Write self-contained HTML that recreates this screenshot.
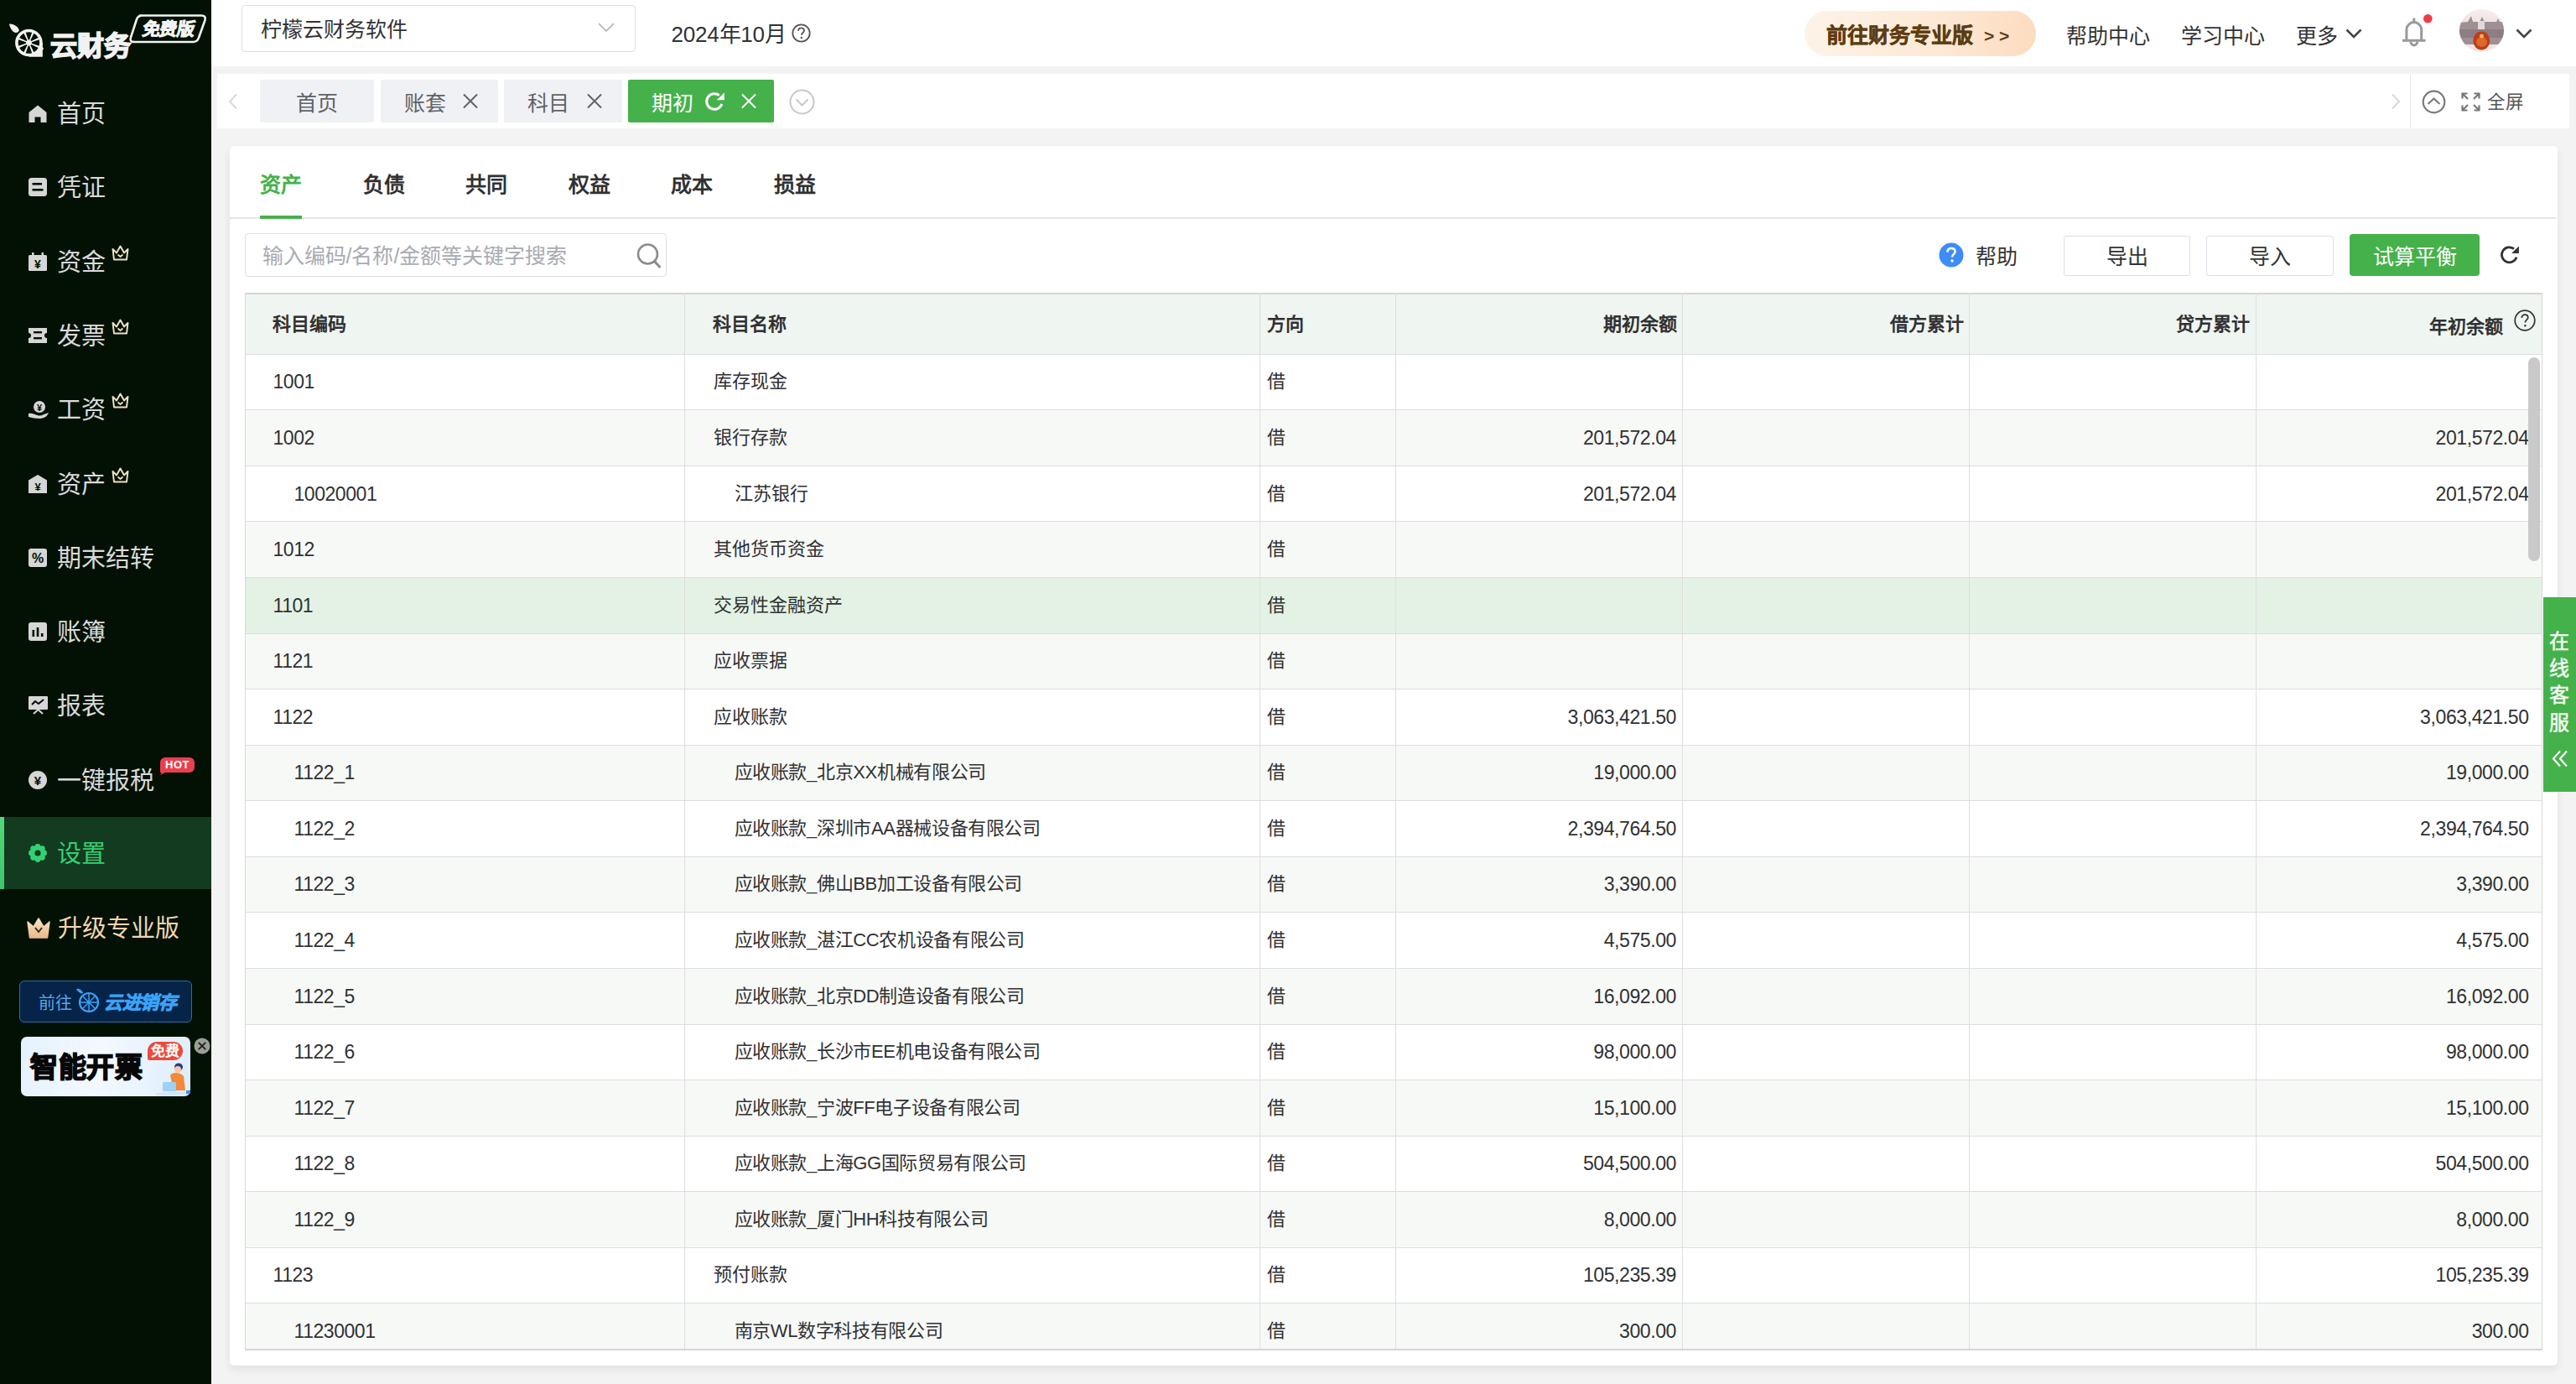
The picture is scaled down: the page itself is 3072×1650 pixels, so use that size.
<!DOCTYPE html>
<html lang="zh-CN">
<head>
<meta charset="utf-8">
<style>
*{box-sizing:border-box;margin:0;padding:0}
html,body{width:3072px;height:1650px;overflow:hidden}
body{position:relative;background:#f3f3f3;font-family:"Liberation Sans",sans-serif;color:#333}
.a{position:absolute;white-space:nowrap}
.bx{position:absolute}
svg{position:absolute;overflow:visible}
</style>
</head>
<body>
<div class="bx" style="left:0;top:0;width:252px;height:1650px;background:#021103"></div>
<svg style="left:0;top:0" width="252" height="80" viewBox="0 0 252 80">
<g fill="#f2f2f2">
<path d="M11 28.7 C15 28 21 31 22.9 36 C22 39.5 17 40 14.5 36.5 C12.5 33.5 11.5 31 11 28.7 Z"/>
<circle cx="34.4" cy="51" r="16.3"/>
<path d="M34.4 51 H50.8 V56 L52 58 L50.8 60 V67.7 H34.4 Z"/>
</g>
<path d="M33.73 47.56 L30.66 38.76 A12.8 12.8 0 0 1 38.14 38.76 L35.07 47.56 Z M36.36 48.10 L40.41 39.70 A12.8 12.8 0 0 1 45.70 44.99 L37.30 49.04 Z M37.84 50.33 L46.64 47.26 A12.8 12.8 0 0 1 46.64 54.74 L37.84 51.67 Z M37.30 52.96 L45.70 57.01 A12.8 12.8 0 0 1 40.41 62.30 L36.36 53.90 Z M35.07 54.44 L38.14 63.24 A12.8 12.8 0 0 1 30.66 63.24 L33.73 54.44 Z M32.44 53.90 L28.39 62.30 A12.8 12.8 0 0 1 23.10 57.01 L31.50 52.96 Z M30.96 51.67 L22.16 54.74 A12.8 12.8 0 0 1 22.16 47.26 L30.96 50.33 Z M31.50 49.04 L23.10 44.99 A12.8 12.8 0 0 1 28.39 39.70 L32.44 48.10 Z" fill="#021103"/>
<text x="60" y="66" font-size="32" font-weight="bold" fill="#f2f2f2" stroke="#f2f2f2" stroke-width="1.6" style="font-family:'Liberation Sans',sans-serif">云财务</text>
<path d="M166 18.5 H240 Q246 18.5 244.5 24 L237 45 Q235.5 50 230 50 H160 Q154 50 156 44.5 L163 23 Q164.5 18.5 170 18.5 Z" fill="none" stroke="#f2f2f2" stroke-width="2.6"/>
<text x="170" y="42.5" font-size="21" font-weight="bold" fill="#f2f2f2" stroke="#f2f2f2" stroke-width="0.9" style="font-family:'Liberation Sans',sans-serif" transform="translate(6 0) skewX(-10)">免费版</text>
</svg>
<svg style="left:34px;top:124.0px" width="22" height="22" viewBox="0 0 22 22"><path d="M11 1.5 L21.5 10 V22 H14.5 V15.5 H7.5 V22 H0.5 V10 Z" fill="#d6d6d6"/></svg>
<div class="a " style="top:116.00px;font-size:29px;line-height:40px;color:#dadada;left:68.00px;">首页</div>
<svg style="left:34px;top:212.3px" width="22" height="22" viewBox="0 0 22 22"><rect x="0" y="0" width="22" height="22" rx="3.5" fill="#d6d6d6"/><rect x="4.5" y="6" width="11.5" height="2.6" fill="#021103"/><rect x="4.5" y="13" width="13" height="2.6" fill="#021103"/></svg>
<div class="a " style="top:204.30px;font-size:29px;line-height:40px;color:#dadada;left:68.00px;">凭证</div>
<svg style="left:34px;top:300.6px" width="22" height="22" viewBox="0 0 22 22"><rect x="0" y="3" width="22" height="19" rx="1.5" fill="#d6d6d6"/><rect x="4" y="0" width="2.5" height="5" fill="#d6d6d6"/><rect x="15.5" y="0" width="2.5" height="5" fill="#d6d6d6"/><text x="11" y="19" font-size="14" font-weight="bold" text-anchor="middle" fill="#021103" style="font-family:'Liberation Sans'">¥</text></svg>
<div class="a " style="top:292.60px;font-size:29px;line-height:40px;color:#dadada;left:68.00px;">资金</div>
<svg style="left:133px;top:291.6px" width="21" height="19" viewBox="0 0 21 19"><path d="M1.5 5 L6 9.5 L10.5 1.5 L15 9.5 L19.5 5 L18 17.5 H3 Z" fill="none" stroke="#ede0c4" stroke-width="2" stroke-linejoin="round"/><path d="M7.5 11.5 L10.5 14 L13.5 11.5" fill="none" stroke="#ede0c4" stroke-width="1.8"/></svg>
<svg style="left:34px;top:388.9px" width="22" height="22" viewBox="0 0 22 22"><path d="M0 2 H22 V8 A3 3 0 0 0 22 14 V20 H0 V14 A3 3 0 0 0 0 8 Z" fill="#d6d6d6"/><rect x="6" y="6" width="10" height="2.4" fill="#021103"/><rect x="6" y="13" width="10" height="2.4" fill="#021103"/></svg>
<div class="a " style="top:380.90px;font-size:29px;line-height:40px;color:#dadada;left:68.00px;">发票</div>
<svg style="left:133px;top:379.9px" width="21" height="19" viewBox="0 0 21 19"><path d="M1.5 5 L6 9.5 L10.5 1.5 L15 9.5 L19.5 5 L18 17.5 H3 Z" fill="none" stroke="#ede0c4" stroke-width="2" stroke-linejoin="round"/><path d="M7.5 11.5 L10.5 14 L13.5 11.5" fill="none" stroke="#ede0c4" stroke-width="1.8"/></svg>
<svg style="left:34px;top:477.2px" width="22" height="22" viewBox="0 0 22 22"><circle cx="13" cy="8" r="7" fill="#d6d6d6"/><text x="13" y="13" font-size="11" font-weight="bold" text-anchor="middle" fill="#021103" style="font-family:'Liberation Sans'">¥</text><path d="M0 16 C4 15 8 17.5 12 18.5 C16 19 20 16 24 15 C22 20 18 22 13 22 C8 22 4 21 0 20 Z" fill="#d6d6d6"/></svg>
<div class="a " style="top:469.20px;font-size:29px;line-height:40px;color:#dadada;left:68.00px;">工资</div>
<svg style="left:133px;top:468.2px" width="21" height="19" viewBox="0 0 21 19"><path d="M1.5 5 L6 9.5 L10.5 1.5 L15 9.5 L19.5 5 L18 17.5 H3 Z" fill="none" stroke="#ede0c4" stroke-width="2" stroke-linejoin="round"/><path d="M7.5 11.5 L10.5 14 L13.5 11.5" fill="none" stroke="#ede0c4" stroke-width="1.8"/></svg>
<svg style="left:34px;top:565.5px" width="22" height="22" viewBox="0 0 22 22"><path d="M11 0 L22 6.5 V22 H0 V6.5 Z" fill="#d6d6d6"/><text x="11" y="18.5" font-size="13" font-weight="bold" text-anchor="middle" fill="#021103" style="font-family:'Liberation Sans'">¥</text></svg>
<div class="a " style="top:557.50px;font-size:29px;line-height:40px;color:#dadada;left:68.00px;">资产</div>
<svg style="left:133px;top:556.5px" width="21" height="19" viewBox="0 0 21 19"><path d="M1.5 5 L6 9.5 L10.5 1.5 L15 9.5 L19.5 5 L18 17.5 H3 Z" fill="none" stroke="#ede0c4" stroke-width="2" stroke-linejoin="round"/><path d="M7.5 11.5 L10.5 14 L13.5 11.5" fill="none" stroke="#ede0c4" stroke-width="1.8"/></svg>
<svg style="left:34px;top:653.8px" width="22" height="22" viewBox="0 0 22 22"><rect x="0" y="0" width="22" height="22" rx="3" fill="#d6d6d6"/><text x="11" y="17" font-size="16" font-weight="bold" text-anchor="middle" fill="#021103" style="font-family:'Liberation Sans'">%</text></svg>
<div class="a " style="top:645.80px;font-size:29px;line-height:40px;color:#dadada;left:68.00px;">期末结转</div>
<svg style="left:34px;top:742.1px" width="22" height="22" viewBox="0 0 22 22"><rect x="0" y="0" width="22" height="22" rx="3" fill="#d6d6d6"/><rect x="4.5" y="9" width="2.6" height="8" fill="#021103"/><rect x="9.7" y="6" width="2.6" height="11" fill="#021103"/><rect x="14.9" y="13" width="2.6" height="4" fill="#021103"/></svg>
<div class="a " style="top:734.10px;font-size:29px;line-height:40px;color:#dadada;left:68.00px;">账簿</div>
<svg style="left:34px;top:830.4px" width="22" height="22" viewBox="0 0 22 22"><rect x="0" y="0" width="23" height="16" rx="1" fill="#d6d6d6"/><path d="M4 10 L8 6 L12 9 L18 4" stroke="#020d04" stroke-width="2" fill="none"/><path d="M11.5 16 L6 21 M11.5 16 L17 21" stroke="#d6d6d6" stroke-width="2"/></svg>
<div class="a " style="top:822.40px;font-size:29px;line-height:40px;color:#dadada;left:68.00px;">报表</div>
<svg style="left:34px;top:918.7px" width="22" height="22" viewBox="0 0 22 22"><circle cx="11" cy="11" r="11" fill="#d6d6d6"/><text x="11" y="17" font-size="15" font-weight="bold" text-anchor="middle" fill="#021103" style="font-family:'Liberation Sans'">¥</text></svg>
<div class="a " style="top:910.70px;font-size:29px;line-height:40px;color:#dadada;left:68.00px;">一键报税</div>
<div class="bx" style="left:191px;top:903px;width:41px;height:18px;background:#e9404f;border-radius:6px 6px 6px 0"></div>
<svg style="left:185px;top:914px" width="12" height="12" viewBox="0 0 12 12"><path d="M12 0 L6 10 L12 7 Z" fill="#e9404f"/></svg>
<div class="a" style="left:191px;top:903px;width:41px;text-align:center;font-size:13px;line-height:18px;font-weight:bold;color:#fff;letter-spacing:0.5px">HOT</div>
<div class="bx" style="left:0;top:974.0px;width:252px;height:86px;background:#133b20"></div>
<div class="bx" style="left:0;top:974.0px;width:5px;height:86px;background:linear-gradient(180deg,#55d77a,#3fc56c)"></div>
<svg style="left:34px;top:1006.0px" width="22" height="22" viewBox="0 0 22 22"><g fill="#33d074"><circle cx="11" cy="11" r="8"/><circle cx="18.60" cy="11.00" r="3.4"/><circle cx="16.37" cy="16.37" r="3.4"/><circle cx="11.00" cy="18.60" r="3.4"/><circle cx="5.63" cy="16.37" r="3.4"/><circle cx="3.40" cy="11.00" r="3.4"/><circle cx="5.63" cy="5.63" r="3.4"/><circle cx="11.00" cy="3.40" r="3.4"/><circle cx="16.37" cy="5.63" r="3.4"/></g><circle cx="11" cy="11" r="3.6" fill="#133b20"/></svg>
<div class="a " style="top:998.00px;font-size:29px;line-height:40px;color:#33d074;left:68.00px;">设置</div>
<svg style="left:32px;top:1093.3px" width="28" height="26" viewBox="0 0 28 26"><defs><linearGradient id="cg" x1="0" y1="0" x2="0" y2="1"><stop offset="0" stop-color="#fbe3c4"/><stop offset="1" stop-color="#e9b98a"/></linearGradient></defs>
<path d="M1 6 L8 12 L14 2 L20 12 L27 6 L24.5 25 H3.5 Z" fill="url(#cg)" stroke="url(#cg)" stroke-width="1.5" stroke-linejoin="round"/><path d="M10 13 L14 18 L18 13" fill="none" stroke="#3a2a10" stroke-width="2"/></svg>
<div class="a " style="top:1087.30px;font-size:29px;line-height:40px;color:#f3d5b0;left:69.00px;">升级专业版</div>
<div class="bx" style="left:23px;top:1169px;width:206px;height:50px;background:#062447;border:1.5px solid #2a6bb0;border-radius:6px"></div>
<div class="a " style="top:1182.00px;font-size:20px;line-height:28px;color:#5aa5ea;left:46.00px;">前往</div>
<svg style="left:90px;top:1178px" width="32" height="30" viewBox="0 0 32 30"><path d="M1 1 C4 0 8 2 9 6 C6 7 3 5 1 1 Z" fill="#3ba2f7"/>
<circle cx="16" cy="17" r="11" fill="none" stroke="#3ba2f7" stroke-width="2.2"/>
<g stroke="#3ba2f7" stroke-width="1.5"><line x1="16" y1="7" x2="16" y2="27"/><line x1="6" y1="17" x2="26" y2="17"/><line x1="9" y1="10" x2="23" y2="24"/><line x1="23" y1="10" x2="9" y2="24"/></g></svg>
<div class="a " style="top:1181.00px;font-size:22px;line-height:30px;color:#3ba2f7;font-weight:bold;left:124.00px;font-style:italic;letter-spacing:-0.5px;-webkit-text-stroke:0.8px #3ba2f7">云进销存</div>
<div class="bx" style="left:25px;top:1236px;width:202px;height:71px;border-radius:7px;background:linear-gradient(100deg,#e4f1fd 0%,#f4f9ff 45%,#dceefc 100%)"></div>
<div class="a " style="top:1251.00px;font-size:33px;line-height:44px;color:#080808;font-weight:bold;left:36.00px;-webkit-text-stroke:1.6px #080808;letter-spacing:0.5px">智能开票</div>
<div class="bx" style="left:176px;top:1242px;width:42px;height:22px;background:#ec4a3c;border-radius:11px 11px 11px 2px"></div>
<div class="a " style="top:1243.00px;font-size:17px;line-height:22px;color:#fff;font-weight:bold;left:177.00px;width:40px;text-align:center">免费</div>
<svg style="left:165px;top:1266px" width="62" height="42" viewBox="0 0 62 42">
<ellipse cx="48" cy="6" rx="5" ry="4.5" fill="#2b3a8c"/>
<circle cx="47" cy="9" r="4" fill="#f6c9a8"/>
<path d="M38 16 C40 12 50 12 54 17 L56 34 L42 34 Z" fill="#f28a3a"/>
<rect x="29" y="24" width="16" height="11" rx="1.5" fill="#9fd0f6"/>
<path d="M20 37 L60 35 L58 39 L22 40 Z" fill="#cfe6fb"/>
<rect x="57" y="34" width="5" height="4" fill="#3f8ee8"/>
</svg>
<svg style="left:231px;top:1237px" width="20" height="20" viewBox="0 0 20 20"><circle cx="10" cy="10" r="9.5" fill="#9a9d98"/><path d="M5.8 5.8 L14.2 14.2 M14.2 5.8 L5.8 14.2" stroke="#1b1f1b" stroke-width="1.8"/></svg>
<div class="bx" style="left:252px;top:0;width:2820px;height:79px;background:#fff"></div>
<div class="bx" style="left:288px;top:6px;width:470px;height:56px;border:1px solid #dcdfe6;border-radius:4px;background:#fff"></div>
<div class="a " style="top:17.00px;font-size:25px;line-height:36px;color:#333;left:311.00px;">柠檬云财务软件</div>
<svg style="left:713px;top:27px" width="20" height="12" viewBox="0 0 20 12"><path d="M1 1 L10 10 L19 1" fill="none" stroke="#b9bcc2" stroke-width="1.8"/></svg>
<div class="a " style="top:22.50px;font-size:26px;line-height:36px;color:#303133;left:800.50px;letter-spacing:-0.2px">2024年10月</div>
<svg style="left:944px;top:28px" width="23" height="23" viewBox="0 0 23 23"><circle cx="11.5" cy="11.5" r="10.2" fill="none" stroke="#555" stroke-width="1.8"/><path d="M8 8.8 C8 6.5 9.7 5.4 11.5 5.4 C13.5 5.4 15 6.6 15 8.5 C15 10.8 11.8 11.2 11.8 13.8" fill="none" stroke="#555" stroke-width="1.8"/><circle cx="11.8" cy="17" r="1.2" fill="#555"/></svg>
<div class="bx" style="left:2152px;top:13px;width:276px;height:54px;border-radius:27px;background:linear-gradient(90deg,#fdf3e8 0%,#fde8d4 60%,#fcdcc0 100%)"></div>
<div class="a " style="top:24.00px;font-size:25px;line-height:36px;color:#5c3d12;font-weight:bold;left:2178.00px;-webkit-text-stroke:0.5px #5c3d12">前往财务专业版</div>
<div class="a " style="top:28.00px;font-size:21px;line-height:30px;color:#5c3d12;font-weight:bold;left:2366.00px;">&gt; &gt;</div>
<div class="a " style="top:24.50px;font-size:25px;line-height:36px;color:#333;left:2464.00px;">帮助中心</div>
<div class="a " style="top:24.50px;font-size:25px;line-height:36px;color:#333;left:2601.00px;">学习中心</div>
<div class="a " style="top:24.50px;font-size:25px;line-height:36px;color:#333;left:2738.00px;">更多</div>
<svg style="left:2797px;top:34px" width="20" height="13" viewBox="0 0 20 13"><path d="M1.5 1.5 L10 10 L18.5 1.5" fill="none" stroke="#444" stroke-width="2.6"/></svg>
<svg style="left:2860px;top:18px" width="42" height="40" viewBox="0 0 42 40"><g fill="none" stroke="#999" stroke-width="3">
<path d="M18.8 3.5 V8"/><path d="M9.9 29.5 V17.5 A8.9 8.9 0 0 1 27.7 17.5 V29.5"/><path d="M5 30.3 H32.5"/><path d="M14.9 32 A3.9 3.9 0 0 0 22.7 32"/></g>
<circle cx="35.3" cy="4.3" r="5.3" fill="#f03a45"/></svg>
<svg style="left:2933px;top:11px" width="53" height="51" viewBox="0 0 53 51"><defs><clipPath id="av"><ellipse cx="26.5" cy="25.2" rx="26.5" ry="25.2"/></clipPath>
<linearGradient id="avs" x1="0" y1="0" x2="0" y2="1"><stop offset="0" stop-color="#f6eeea"/><stop offset="1" stop-color="#ddd0d0"/></linearGradient></defs>
<g clip-path="url(#av)"><rect width="53" height="51" fill="url(#avs)"/>
<path d="M0 16 L10 15 L14 8 L16 15 L24 15 L27 9 L30 15 L44 15 L46 11 L48 15 L53 15 V42 H0 Z" fill="#a09096"/>
<rect x="0" y="24" width="53" height="10" fill="#7e6e76" opacity="0.55"/>
<rect x="22" y="14" width="8" height="10" fill="#ece6e6" opacity="0.85"/>
<rect x="0" y="42" width="53" height="9" fill="#f2e6e2"/>
<ellipse cx="26.3" cy="37.5" rx="10" ry="11" fill="#b8401a"/><ellipse cx="26.5" cy="39" rx="6.5" ry="6" fill="#e0672a"/><circle cx="26.5" cy="32" r="2.5" fill="#f4b060"/></g></svg>
<svg style="left:3000px;top:34px" width="20" height="13" viewBox="0 0 20 13"><path d="M1.5 1.5 L10 10 L18.5 1.5" fill="none" stroke="#444" stroke-width="2.6"/></svg>
<div class="bx" style="left:259px;top:88px;width:2805px;height:65px;background:#fff"></div>
<svg style="left:271px;top:111px" width="14" height="20" viewBox="0 0 14 20"><path d="M11 1.5 L3 10 L11 18.5" fill="none" stroke="#d8d8d8" stroke-width="2"/></svg>
<div class="bx" style="left:310px;top:95px;width:136px;height:51px;background:#eff1f5;border-radius:2px"></div>
<div class="a " style="top:105.00px;font-size:25px;line-height:36px;color:#606266;left:353.00px;">首页</div>
<div class="bx" style="left:454px;top:95px;width:140px;height:51px;background:#eff1f5;border-radius:2px"></div>
<div class="a " style="top:105.00px;font-size:25px;line-height:36px;color:#606266;left:482.00px;">账套</div>
<svg style="left:552px;top:112px" width="18" height="17" viewBox="0 0 18 17"><path d="M1 0.5 L17 16.5 M17 0.5 L1 16.5" stroke="#606266" stroke-width="2"/></svg>
<div class="bx" style="left:601px;top:95px;width:141px;height:51px;background:#eff1f5;border-radius:2px"></div>
<div class="a " style="top:105.00px;font-size:25px;line-height:36px;color:#606266;left:629.00px;">科目</div>
<svg style="left:699.5px;top:112px" width="18" height="17" viewBox="0 0 18 17"><path d="M1 0.5 L17 16.5 M17 0.5 L1 16.5" stroke="#606266" stroke-width="2"/></svg>
<div class="bx" style="left:749px;top:95px;width:174px;height:51px;background:#45b14a;border-radius:2px"></div>
<div class="a " style="top:105.00px;font-size:25px;line-height:36px;color:#fff;left:777.00px;">期初</div>
<svg style="left:884px;top:112px" width="18" height="17" viewBox="0 0 18 17"><path d="M1 0.5 L17 16.5 M17 0.5 L1 16.5" stroke="#fff" stroke-width="2"/></svg>
<svg style="left:0;top:0" width="1" height="1"><path d="M860.84 123.87 A9.30 9.30 0 1 1 857.73 113.67" fill="none" stroke="#fff" stroke-width="3"/><polygon points="863.80,110.40 854.70,119.20 863.80,119.20" fill="#fff"/></svg>
<svg style="left:941px;top:106px" width="31" height="31" viewBox="0 0 31 31"><circle cx="15.5" cy="15.5" r="14" fill="none" stroke="#c8c8c8" stroke-width="2"/><path d="M8.5 12.5 L15.5 19.5 L22.5 12.5" fill="none" stroke="#c8c8c8" stroke-width="2"/></svg>
<svg style="left:2850px;top:111px" width="14" height="20" viewBox="0 0 14 20"><path d="M3 1.5 L11 10 L3 18.5" fill="none" stroke="#d8d8d8" stroke-width="2"/></svg>
<div class="bx" style="left:2874px;top:88px;width:1px;height:65px;background:#e8e8e8"></div>
<svg style="left:2888px;top:107px" width="29" height="29" viewBox="0 0 29 29"><circle cx="14.5" cy="14.5" r="12.8" fill="none" stroke="#7a7a7a" stroke-width="2.2"/><path d="M7.5 17 L14.5 10.5 L21.5 17" fill="none" stroke="#7a7a7a" stroke-width="2.2"/></svg>
<svg style="left:2935px;top:110px" width="23" height="23" viewBox="0 0 23 23"><g fill="none" stroke="#777" stroke-width="2.2">
<path d="M1.5 7.5 V1.5 H7.5 M1.5 1.5 L8 8"/><path d="M15.5 1.5 H21.5 V7.5 M21.5 1.5 L15 8"/><path d="M1.5 15.5 V21.5 H7.5 M1.5 21.5 L8 15"/><path d="M21.5 15.5 V21.5 H15.5 M21.5 21.5 L15 15"/></g></svg>
<div class="a " style="top:105.50px;font-size:21.5px;line-height:32px;color:#555;left:2965.50px;">全屏</div>
<div class="bx" style="left:274px;top:174px;width:2776px;height:1454px;background:#fff;border-radius:5px;box-shadow:0 5px 10px rgba(20,20,40,0.08)"></div>
<div class="a " style="top:201.50px;font-size:25px;line-height:36px;color:#44b24a;font-weight:bold;left:310.00px;">资产</div>
<div class="a " style="top:201.50px;font-size:25px;line-height:36px;color:#303133;font-weight:bold;left:432.60px;">负债</div>
<div class="a " style="top:201.50px;font-size:25px;line-height:36px;color:#303133;font-weight:bold;left:555.20px;">共同</div>
<div class="a " style="top:201.50px;font-size:25px;line-height:36px;color:#303133;font-weight:bold;left:677.80px;">权益</div>
<div class="a " style="top:201.50px;font-size:25px;line-height:36px;color:#303133;font-weight:bold;left:800.40px;">成本</div>
<div class="a " style="top:201.50px;font-size:25px;line-height:36px;color:#303133;font-weight:bold;left:923.00px;">损益</div>
<div class="bx" style="left:274px;top:259px;width:2775px;height:2px;background:#e6e6e6"></div>
<div class="bx" style="left:310px;top:257px;width:50px;height:4px;background:#45b14a"></div>
<div class="bx" style="left:292px;top:278px;width:503px;height:52px;border:1.5px solid #dcdfe6;border-radius:4px;background:#fff"></div>
<div class="a " style="top:287.50px;font-size:25px;line-height:34px;color:#a8abb2;left:312.50px;">输入编码/名称/金额等关键字搜索</div>
<svg style="left:759px;top:289px" width="30" height="32" viewBox="0 0 30 32"><circle cx="13.5" cy="14" r="11.5" fill="none" stroke="#8c8c8c" stroke-width="2.6"/><path d="M21.5 22.5 L27.5 29" stroke="#8c8c8c" stroke-width="3.2" stroke-linecap="round"/></svg>
<svg style="left:2312px;top:289px" width="30" height="30" viewBox="0 0 30 30"><circle cx="15" cy="15" r="14.5" fill="#3e8cf5"/><path d="M10.5 11.5 C10.5 8.5 12.5 7 15 7 C17.7 7 19.5 8.6 19.5 11 C19.5 14 16 14.3 16 17.5" fill="none" stroke="#fff" stroke-width="2.6"/><circle cx="16" cy="22" r="1.7" fill="#fff"/></svg>
<div class="a " style="top:288.00px;font-size:25px;line-height:36px;color:#333;left:2356.00px;">帮助</div>
<div class="bx" style="left:2461px;top:280.5px;width:151px;height:48px;border:1px solid #dcdfe6;border-radius:3px;background:#fff"></div>
<div class="a " style="top:288.00px;font-size:25px;line-height:36px;color:#333;left:2461.00px;width:151px;text-align:center;">导出</div>
<div class="bx" style="left:2631px;top:280.5px;width:152px;height:48px;border:1px solid #dcdfe6;border-radius:3px;background:#fff"></div>
<div class="a " style="top:288.00px;font-size:25px;line-height:36px;color:#333;left:2631.00px;width:152px;text-align:center;">导入</div>
<div class="bx" style="left:2802px;top:279px;width:155px;height:49.5px;background:#45b14a;border-radius:4px"></div>
<div class="a " style="top:288.00px;font-size:25px;line-height:36px;color:#fff;left:2802.00px;width:155px;text-align:center;">试算平衡</div>
<svg style="left:0;top:0" width="1" height="1"><path d="M3001.06 306.58 A9.00 9.00 0 1 1 2998.04 296.71" fill="none" stroke="#333" stroke-width="2.8"/><polygon points="3003.86,293.59 2995.10,302.07 3003.86,302.07" fill="#333"/></svg>
<div class="bx" style="left:292px;top:349px;width:2740px;height:1261px;background:#fff;overflow:hidden">
<div class="bx" style="left:0;top:0;width:2740px;height:74px;background:#eff5f0"></div>
<div class="bx" style="left:0;top:0;width:2740px;height:2px;background:#d5d5d5"></div>
<div class="bx" style="left:0;top:73.30px;width:2740px;height:66.5625px;background:#ffffff"></div>
<div class="bx" style="left:0;top:72.80px;width:2740px;height:1px;background:#dcdfdd"></div>
<div class="bx" style="left:0;top:139.86px;width:2740px;height:66.5625px;background:#f7f9f7"></div>
<div class="bx" style="left:0;top:139.36px;width:2740px;height:1px;background:#dcdfdd"></div>
<div class="bx" style="left:0;top:206.42px;width:2740px;height:66.5625px;background:#ffffff"></div>
<div class="bx" style="left:0;top:205.92px;width:2740px;height:1px;background:#dcdfdd"></div>
<div class="bx" style="left:0;top:272.99px;width:2740px;height:66.5625px;background:#f7f9f7"></div>
<div class="bx" style="left:0;top:272.49px;width:2740px;height:1px;background:#dcdfdd"></div>
<div class="bx" style="left:0;top:339.55px;width:2740px;height:66.5625px;background:#e3f2e4"></div>
<div class="bx" style="left:0;top:339.05px;width:2740px;height:1px;background:#dcdfdd"></div>
<div class="bx" style="left:0;top:406.11px;width:2740px;height:66.5625px;background:#f7f9f7"></div>
<div class="bx" style="left:0;top:405.61px;width:2740px;height:1px;background:#dcdfdd"></div>
<div class="bx" style="left:0;top:472.67px;width:2740px;height:66.5625px;background:#ffffff"></div>
<div class="bx" style="left:0;top:472.17px;width:2740px;height:1px;background:#dcdfdd"></div>
<div class="bx" style="left:0;top:539.24px;width:2740px;height:66.5625px;background:#f7f9f7"></div>
<div class="bx" style="left:0;top:538.74px;width:2740px;height:1px;background:#dcdfdd"></div>
<div class="bx" style="left:0;top:605.80px;width:2740px;height:66.5625px;background:#ffffff"></div>
<div class="bx" style="left:0;top:605.30px;width:2740px;height:1px;background:#dcdfdd"></div>
<div class="bx" style="left:0;top:672.36px;width:2740px;height:66.5625px;background:#f7f9f7"></div>
<div class="bx" style="left:0;top:671.86px;width:2740px;height:1px;background:#dcdfdd"></div>
<div class="bx" style="left:0;top:738.92px;width:2740px;height:66.5625px;background:#ffffff"></div>
<div class="bx" style="left:0;top:738.42px;width:2740px;height:1px;background:#dcdfdd"></div>
<div class="bx" style="left:0;top:805.49px;width:2740px;height:66.5625px;background:#f7f9f7"></div>
<div class="bx" style="left:0;top:804.99px;width:2740px;height:1px;background:#dcdfdd"></div>
<div class="bx" style="left:0;top:872.05px;width:2740px;height:66.5625px;background:#ffffff"></div>
<div class="bx" style="left:0;top:871.55px;width:2740px;height:1px;background:#dcdfdd"></div>
<div class="bx" style="left:0;top:938.61px;width:2740px;height:66.5625px;background:#f7f9f7"></div>
<div class="bx" style="left:0;top:938.11px;width:2740px;height:1px;background:#dcdfdd"></div>
<div class="bx" style="left:0;top:1005.17px;width:2740px;height:66.5625px;background:#ffffff"></div>
<div class="bx" style="left:0;top:1004.67px;width:2740px;height:1px;background:#dcdfdd"></div>
<div class="bx" style="left:0;top:1071.74px;width:2740px;height:66.5625px;background:#f7f9f7"></div>
<div class="bx" style="left:0;top:1071.24px;width:2740px;height:1px;background:#dcdfdd"></div>
<div class="bx" style="left:0;top:1138.30px;width:2740px;height:66.5625px;background:#ffffff"></div>
<div class="bx" style="left:0;top:1137.80px;width:2740px;height:1px;background:#dcdfdd"></div>
<div class="bx" style="left:0;top:1204.86px;width:2740px;height:66.5625px;background:#f7f9f7"></div>
<div class="bx" style="left:0;top:1204.36px;width:2740px;height:1px;background:#dcdfdd"></div>
<div class="bx" style="left:523.90px;top:0;width:1px;height:1261px;background:#dedede"></div>
<div class="bx" style="left:1210.00px;top:0;width:1px;height:1261px;background:#dedede"></div>
<div class="bx" style="left:1371.90px;top:0;width:1px;height:1261px;background:#dedede"></div>
<div class="bx" style="left:1713.90px;top:0;width:1px;height:1261px;background:#dedede"></div>
<div class="bx" style="left:2056.10px;top:0;width:1px;height:1261px;background:#dedede"></div>
<div class="bx" style="left:2397.90px;top:0;width:1px;height:1261px;background:#dedede"></div>
</div>
<div class="bx" style="left:292px;top:349px;width:1px;height:1261px;background:#d8d8d8"></div>
<div class="bx" style="left:3031px;top:349px;width:1px;height:1261px;background:#d8d8d8"></div>
<div class="bx" style="left:292px;top:1608px;width:2740px;height:2px;background:#d5d5d5"></div>
<div class="a " style="top:370.50px;font-size:22px;line-height:32px;color:#303133;font-weight:bold;left:325.00px;">科目编码</div>
<div class="a " style="top:370.50px;font-size:22px;line-height:32px;color:#303133;font-weight:bold;left:850.00px;">科目名称</div>
<div class="a " style="top:370.50px;font-size:22px;line-height:32px;color:#303133;font-weight:bold;left:1511.00px;">方向</div>
<div class="a " style="top:370.50px;font-size:22px;line-height:32px;color:#303133;font-weight:bold;right:1072.50px;text-align:right;">期初余额</div>
<div class="a " style="top:370.50px;font-size:22px;line-height:32px;color:#303133;font-weight:bold;right:730.50px;text-align:right;">借方累计</div>
<div class="a " style="top:370.50px;font-size:22px;line-height:32px;color:#303133;font-weight:bold;right:389.00px;text-align:right;">贷方累计</div>
<div class="a " style="top:373.50px;font-size:22px;line-height:32px;color:#303133;font-weight:bold;right:87.50px;text-align:right;">年初余额</div>
<svg style="left:2998px;top:369px" width="26" height="26" viewBox="0 0 26 26"><circle cx="13" cy="13" r="11.8" fill="none" stroke="#333" stroke-width="1.7"/><path d="M9.3 10 C9.3 7.4 11 6.2 13 6.2 C15.2 6.2 16.8 7.5 16.8 9.6 C16.8 12.3 13.3 12.7 13.3 15.6" fill="none" stroke="#333" stroke-width="1.7"/><circle cx="13.3" cy="19.2" r="1.2" fill="#333"/></svg>
<div class="a " style="top:439.38px;font-size:23px;line-height:32px;color:#303133;left:325.50px;letter-spacing:-0.45px">1001</div>
<div class="a " style="top:439.38px;font-size:22px;line-height:32px;color:#303133;left:851.00px;">库存现金</div>
<div class="a " style="top:439.38px;font-size:22px;line-height:32px;color:#303133;left:1510.50px;">借</div>
<div class="a " style="top:505.94px;font-size:23px;line-height:32px;color:#303133;left:325.50px;letter-spacing:-0.45px">1002</div>
<div class="a " style="top:505.94px;font-size:22px;line-height:32px;color:#303133;left:851.00px;">银行存款</div>
<div class="a " style="top:505.94px;font-size:22px;line-height:32px;color:#303133;left:1510.50px;">借</div>
<div class="a " style="top:505.94px;font-size:23px;line-height:32px;color:#303133;right:1073.00px;text-align:right;letter-spacing:-0.4px">201,572.04</div>
<div class="a " style="top:505.94px;font-size:23px;line-height:32px;color:#303133;right:56.40px;text-align:right;letter-spacing:-0.4px">201,572.04</div>
<div class="a " style="top:572.51px;font-size:23px;line-height:32px;color:#303133;left:350.50px;letter-spacing:-0.45px">10020001</div>
<div class="a " style="top:572.51px;font-size:22px;line-height:32px;color:#303133;left:875.50px;">江苏银行</div>
<div class="a " style="top:572.51px;font-size:22px;line-height:32px;color:#303133;left:1510.50px;">借</div>
<div class="a " style="top:572.51px;font-size:23px;line-height:32px;color:#303133;right:1073.00px;text-align:right;letter-spacing:-0.4px">201,572.04</div>
<div class="a " style="top:572.51px;font-size:23px;line-height:32px;color:#303133;right:56.40px;text-align:right;letter-spacing:-0.4px">201,572.04</div>
<div class="a " style="top:639.07px;font-size:23px;line-height:32px;color:#303133;left:325.50px;letter-spacing:-0.45px">1012</div>
<div class="a " style="top:639.07px;font-size:22px;line-height:32px;color:#303133;left:851.00px;">其他货币资金</div>
<div class="a " style="top:639.07px;font-size:22px;line-height:32px;color:#303133;left:1510.50px;">借</div>
<div class="a " style="top:705.63px;font-size:23px;line-height:32px;color:#303133;left:325.50px;letter-spacing:-0.45px">1101</div>
<div class="a " style="top:705.63px;font-size:22px;line-height:32px;color:#303133;left:851.00px;">交易性金融资产</div>
<div class="a " style="top:705.63px;font-size:22px;line-height:32px;color:#303133;left:1510.50px;">借</div>
<div class="a " style="top:772.19px;font-size:23px;line-height:32px;color:#303133;left:325.50px;letter-spacing:-0.45px">1121</div>
<div class="a " style="top:772.19px;font-size:22px;line-height:32px;color:#303133;left:851.00px;">应收票据</div>
<div class="a " style="top:772.19px;font-size:22px;line-height:32px;color:#303133;left:1510.50px;">借</div>
<div class="a " style="top:838.76px;font-size:23px;line-height:32px;color:#303133;left:325.50px;letter-spacing:-0.45px">1122</div>
<div class="a " style="top:838.76px;font-size:22px;line-height:32px;color:#303133;left:851.00px;">应收账款</div>
<div class="a " style="top:838.76px;font-size:22px;line-height:32px;color:#303133;left:1510.50px;">借</div>
<div class="a " style="top:838.76px;font-size:23px;line-height:32px;color:#303133;right:1073.00px;text-align:right;letter-spacing:-0.4px">3,063,421.50</div>
<div class="a " style="top:838.76px;font-size:23px;line-height:32px;color:#303133;right:56.40px;text-align:right;letter-spacing:-0.4px">3,063,421.50</div>
<div class="a " style="top:905.32px;font-size:23px;line-height:32px;color:#303133;left:350.50px;letter-spacing:-0.45px">1122_1</div>
<div class="a " style="top:905.32px;font-size:22px;line-height:32px;color:#303133;left:875.50px;letter-spacing:-0.35px">应收账款_北京XX机械有限公司</div>
<div class="a " style="top:905.32px;font-size:22px;line-height:32px;color:#303133;left:1510.50px;">借</div>
<div class="a " style="top:905.32px;font-size:23px;line-height:32px;color:#303133;right:1073.00px;text-align:right;letter-spacing:-0.4px">19,000.00</div>
<div class="a " style="top:905.32px;font-size:23px;line-height:32px;color:#303133;right:56.40px;text-align:right;letter-spacing:-0.4px">19,000.00</div>
<div class="a " style="top:971.88px;font-size:23px;line-height:32px;color:#303133;left:350.50px;letter-spacing:-0.45px">1122_2</div>
<div class="a " style="top:971.88px;font-size:22px;line-height:32px;color:#303133;left:875.50px;letter-spacing:-0.35px">应收账款_深圳市AA器械设备有限公司</div>
<div class="a " style="top:971.88px;font-size:22px;line-height:32px;color:#303133;left:1510.50px;">借</div>
<div class="a " style="top:971.88px;font-size:23px;line-height:32px;color:#303133;right:1073.00px;text-align:right;letter-spacing:-0.4px">2,394,764.50</div>
<div class="a " style="top:971.88px;font-size:23px;line-height:32px;color:#303133;right:56.40px;text-align:right;letter-spacing:-0.4px">2,394,764.50</div>
<div class="a " style="top:1038.44px;font-size:23px;line-height:32px;color:#303133;left:350.50px;letter-spacing:-0.45px">1122_3</div>
<div class="a " style="top:1038.44px;font-size:22px;line-height:32px;color:#303133;left:875.50px;letter-spacing:-0.35px">应收账款_佛山BB加工设备有限公司</div>
<div class="a " style="top:1038.44px;font-size:22px;line-height:32px;color:#303133;left:1510.50px;">借</div>
<div class="a " style="top:1038.44px;font-size:23px;line-height:32px;color:#303133;right:1073.00px;text-align:right;letter-spacing:-0.4px">3,390.00</div>
<div class="a " style="top:1038.44px;font-size:23px;line-height:32px;color:#303133;right:56.40px;text-align:right;letter-spacing:-0.4px">3,390.00</div>
<div class="a " style="top:1105.01px;font-size:23px;line-height:32px;color:#303133;left:350.50px;letter-spacing:-0.45px">1122_4</div>
<div class="a " style="top:1105.01px;font-size:22px;line-height:32px;color:#303133;left:875.50px;letter-spacing:-0.35px">应收账款_湛江CC农机设备有限公司</div>
<div class="a " style="top:1105.01px;font-size:22px;line-height:32px;color:#303133;left:1510.50px;">借</div>
<div class="a " style="top:1105.01px;font-size:23px;line-height:32px;color:#303133;right:1073.00px;text-align:right;letter-spacing:-0.4px">4,575.00</div>
<div class="a " style="top:1105.01px;font-size:23px;line-height:32px;color:#303133;right:56.40px;text-align:right;letter-spacing:-0.4px">4,575.00</div>
<div class="a " style="top:1171.57px;font-size:23px;line-height:32px;color:#303133;left:350.50px;letter-spacing:-0.45px">1122_5</div>
<div class="a " style="top:1171.57px;font-size:22px;line-height:32px;color:#303133;left:875.50px;letter-spacing:-0.35px">应收账款_北京DD制造设备有限公司</div>
<div class="a " style="top:1171.57px;font-size:22px;line-height:32px;color:#303133;left:1510.50px;">借</div>
<div class="a " style="top:1171.57px;font-size:23px;line-height:32px;color:#303133;right:1073.00px;text-align:right;letter-spacing:-0.4px">16,092.00</div>
<div class="a " style="top:1171.57px;font-size:23px;line-height:32px;color:#303133;right:56.40px;text-align:right;letter-spacing:-0.4px">16,092.00</div>
<div class="a " style="top:1238.13px;font-size:23px;line-height:32px;color:#303133;left:350.50px;letter-spacing:-0.45px">1122_6</div>
<div class="a " style="top:1238.13px;font-size:22px;line-height:32px;color:#303133;left:875.50px;letter-spacing:-0.35px">应收账款_长沙市EE机电设备有限公司</div>
<div class="a " style="top:1238.13px;font-size:22px;line-height:32px;color:#303133;left:1510.50px;">借</div>
<div class="a " style="top:1238.13px;font-size:23px;line-height:32px;color:#303133;right:1073.00px;text-align:right;letter-spacing:-0.4px">98,000.00</div>
<div class="a " style="top:1238.13px;font-size:23px;line-height:32px;color:#303133;right:56.40px;text-align:right;letter-spacing:-0.4px">98,000.00</div>
<div class="a " style="top:1304.69px;font-size:23px;line-height:32px;color:#303133;left:350.50px;letter-spacing:-0.45px">1122_7</div>
<div class="a " style="top:1304.69px;font-size:22px;line-height:32px;color:#303133;left:875.50px;letter-spacing:-0.35px">应收账款_宁波FF电子设备有限公司</div>
<div class="a " style="top:1304.69px;font-size:22px;line-height:32px;color:#303133;left:1510.50px;">借</div>
<div class="a " style="top:1304.69px;font-size:23px;line-height:32px;color:#303133;right:1073.00px;text-align:right;letter-spacing:-0.4px">15,100.00</div>
<div class="a " style="top:1304.69px;font-size:23px;line-height:32px;color:#303133;right:56.40px;text-align:right;letter-spacing:-0.4px">15,100.00</div>
<div class="a " style="top:1371.26px;font-size:23px;line-height:32px;color:#303133;left:350.50px;letter-spacing:-0.45px">1122_8</div>
<div class="a " style="top:1371.26px;font-size:22px;line-height:32px;color:#303133;left:875.50px;letter-spacing:-0.35px">应收账款_上海GG国际贸易有限公司</div>
<div class="a " style="top:1371.26px;font-size:22px;line-height:32px;color:#303133;left:1510.50px;">借</div>
<div class="a " style="top:1371.26px;font-size:23px;line-height:32px;color:#303133;right:1073.00px;text-align:right;letter-spacing:-0.4px">504,500.00</div>
<div class="a " style="top:1371.26px;font-size:23px;line-height:32px;color:#303133;right:56.40px;text-align:right;letter-spacing:-0.4px">504,500.00</div>
<div class="a " style="top:1437.82px;font-size:23px;line-height:32px;color:#303133;left:350.50px;letter-spacing:-0.45px">1122_9</div>
<div class="a " style="top:1437.82px;font-size:22px;line-height:32px;color:#303133;left:875.50px;letter-spacing:-0.35px">应收账款_厦门HH科技有限公司</div>
<div class="a " style="top:1437.82px;font-size:22px;line-height:32px;color:#303133;left:1510.50px;">借</div>
<div class="a " style="top:1437.82px;font-size:23px;line-height:32px;color:#303133;right:1073.00px;text-align:right;letter-spacing:-0.4px">8,000.00</div>
<div class="a " style="top:1437.82px;font-size:23px;line-height:32px;color:#303133;right:56.40px;text-align:right;letter-spacing:-0.4px">8,000.00</div>
<div class="a " style="top:1504.38px;font-size:23px;line-height:32px;color:#303133;left:325.50px;letter-spacing:-0.45px">1123</div>
<div class="a " style="top:1504.38px;font-size:22px;line-height:32px;color:#303133;left:851.00px;">预付账款</div>
<div class="a " style="top:1504.38px;font-size:22px;line-height:32px;color:#303133;left:1510.50px;">借</div>
<div class="a " style="top:1504.38px;font-size:23px;line-height:32px;color:#303133;right:1073.00px;text-align:right;letter-spacing:-0.4px">105,235.39</div>
<div class="a " style="top:1504.38px;font-size:23px;line-height:32px;color:#303133;right:56.40px;text-align:right;letter-spacing:-0.4px">105,235.39</div>
<div class="a " style="top:1570.94px;font-size:23px;line-height:32px;color:#303133;left:350.50px;letter-spacing:-0.45px">11230001</div>
<div class="a " style="top:1570.94px;font-size:22px;line-height:32px;color:#303133;left:875.50px;letter-spacing:-0.35px">南京WL数字科技有限公司</div>
<div class="a " style="top:1570.94px;font-size:22px;line-height:32px;color:#303133;left:1510.50px;">借</div>
<div class="a " style="top:1570.94px;font-size:23px;line-height:32px;color:#303133;right:1073.00px;text-align:right;letter-spacing:-0.4px">300.00</div>
<div class="a " style="top:1570.94px;font-size:23px;line-height:32px;color:#303133;right:56.40px;text-align:right;letter-spacing:-0.4px">300.00</div>
<div class="bx" style="left:3015px;top:426px;width:14px;height:243px;background:#c9c9c9;border-radius:7px"></div>
<div class="bx" style="left:3033px;top:712px;width:39px;height:232px;background:#45b14a"></div>
<div class="a " style="top:749.50px;font-size:24px;line-height:30px;color:#f4fbf4;left:3037.00px;width:30px;text-align:center;-webkit-text-stroke:0.5px #f4fbf4">在</div>
<div class="a " style="top:781.90px;font-size:24px;line-height:30px;color:#f4fbf4;left:3037.00px;width:30px;text-align:center;-webkit-text-stroke:0.5px #f4fbf4">线</div>
<div class="a " style="top:814.30px;font-size:24px;line-height:30px;color:#f4fbf4;left:3037.00px;width:30px;text-align:center;-webkit-text-stroke:0.5px #f4fbf4">客</div>
<div class="a " style="top:846.70px;font-size:24px;line-height:30px;color:#f4fbf4;left:3037.00px;width:30px;text-align:center;-webkit-text-stroke:0.5px #f4fbf4">服</div>
<svg style="left:3043px;top:894px" width="20" height="21" viewBox="0 0 20 21"><path d="M10 1.5 L2 10.5 L10 19.5 M18 1.5 L10 10.5 L18 19.5" fill="none" stroke="#f4fbf4" stroke-width="2.3"/></svg>
</body>
</html>
